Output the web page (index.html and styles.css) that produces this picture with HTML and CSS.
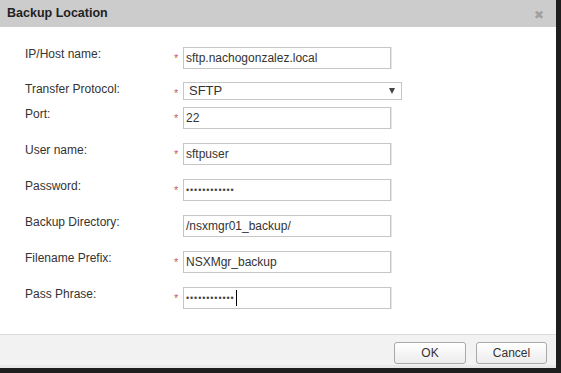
FILE: index.html
```html
<!DOCTYPE html>
<html>
<head>
<title>Backup Location</title>
<meta charset="utf-8">
<link rel="stylesheet" href="styles.css">
</head>
<body>
	<div class="dialog">
		<div class="titlebar">
			<span class="title">Backup Location</span>
			<span class="close">&#x2716;</span>
		</div>
		<div class="form">
			<div class="row first">
				<div class="label">IP/Host name:</div>
				<div class="req">*</div>
				<div class="field">sftp.nachogonzalez.local</div>
			</div>
			<div class="row tight">
				<div class="label">Transfer Protocol:</div>
				<div class="req">*</div>
				<div class="select">SFTP<span class="arrow"></span></div>
			</div>
			<div class="row">
				<div class="label">Port:</div>
				<div class="req">*</div>
				<div class="field">22</div>
			</div>
			<div class="row">
				<div class="label">User name:</div>
				<div class="req">*</div>
				<div class="field">sftpuser</div>
			</div>
			<div class="row">
				<div class="label">Password:</div>
				<div class="req">*</div>
				<div class="field dots">••••••••••••</div>
			</div>
			<div class="row">
				<div class="label">Backup Directory:</div>
				<div class="req"></div>
				<div class="field">/nsxmgr01_backup/</div>
			</div>
			<div class="row">
				<div class="label">Filename Prefix:</div>
				<div class="req">*</div>
				<div class="field">NSXMgr_backup</div>
			</div>
			<div class="row">
				<div class="label">Pass Phrase:</div>
				<div class="req">*</div>
				<div class="field dots">••••••••••••<span class="caret"></span></div>
			</div>
		</div>
		<div class="footer">
			<button class="btn ok">OK</button>
			<button class="btn">Cancel</button>
		</div>
	</div>
</body>
</html>
```

FILE: styles.css
```css
body {
	margin: 0;
	background-color: #1e1e1e;
	font-family: "Liberation Sans", Arial, sans-serif;
	font-size: 12px;
	color: #333;
}
.dialog {
	width: 556px;
	height: 368px;
	background-color: #fff;
	display: flex;
	flex-direction: column;
}
.titlebar {
	height: 27px;
	flex: none;
	background-color: #cccccc;
	display: flex;
	align-items: center;
	justify-content: space-between;
	padding: 0 12px 0 7px;
}
.title {
	font-weight: bold;
	font-size: 12.5px;
	color: #222;
	margin-top: -1px;
}
.close {
	color: #a0a0a0;
	font-size: 12px;
	margin-top: 3px;
}
.form {
	flex: 1;
	padding: 20px 0 0 25px;
}
.row {
	display: flex;
	height: 36px;
}
.row.first {
	height: 35px;
}
.row.tight {
	height: 25px;
}
.label {
	width: 149px;
	line-height: 14px;
	padding-top: 0;
}
.req {
	width: 9px;
	color: #c0605a;
	font-size: 11px;
	padding-top: 5px;
}
.field {
	width: 208px;
	height: 22px;
	box-sizing: border-box;
	border: 1px solid #c6c6c6;
	box-shadow: 1px 0 0 #e6e6e6;
	padding: 0 2px;
	line-height: 20px;
	display: flex;
	align-items: center;
}
.field.dots {
	font-size: 9px;
	letter-spacing: 0.9px;
	color: #444;
}
.caret {
	width: 1px;
	height: 16px;
	background-color: #000;
	margin-left: 1px;
}
.select {
	width: 219px;
	height: 18px;
	box-sizing: border-box;
	border: 1px solid #c6c6c6;
	padding: 0 6px 0 5px;
	line-height: 16px;
	font-size: 13px;
	display: flex;
	align-items: center;
	justify-content: space-between;
}
.arrow {
	width: 0;
	height: 0;
	border-left: 3px solid transparent;
	border-right: 3px solid transparent;
	border-top: 6px solid #444;
}
.footer {
	flex: none;
	height: 34px;
	box-sizing: border-box;
	border-top: 1px solid #dcdcdc;
	border-bottom: 3px solid #e9e9e9;
	background-color: #f2f2f2;
	display: flex;
	justify-content: flex-end;
	align-items: flex-start;
	gap: 10px;
	padding: 7px 9px 0 0;
}
.btn {
	width: 71px;
	height: 22px;
	border: 1px solid #a9a9a9;
	border-radius: 3px;
	background: linear-gradient(#ffffff, #ececec);
	font-family: "Liberation Sans", Arial, sans-serif;
	font-size: 12px;
	color: #333;
	padding: 0;
}
.btn.ok {
	width: 72px;
}
```
